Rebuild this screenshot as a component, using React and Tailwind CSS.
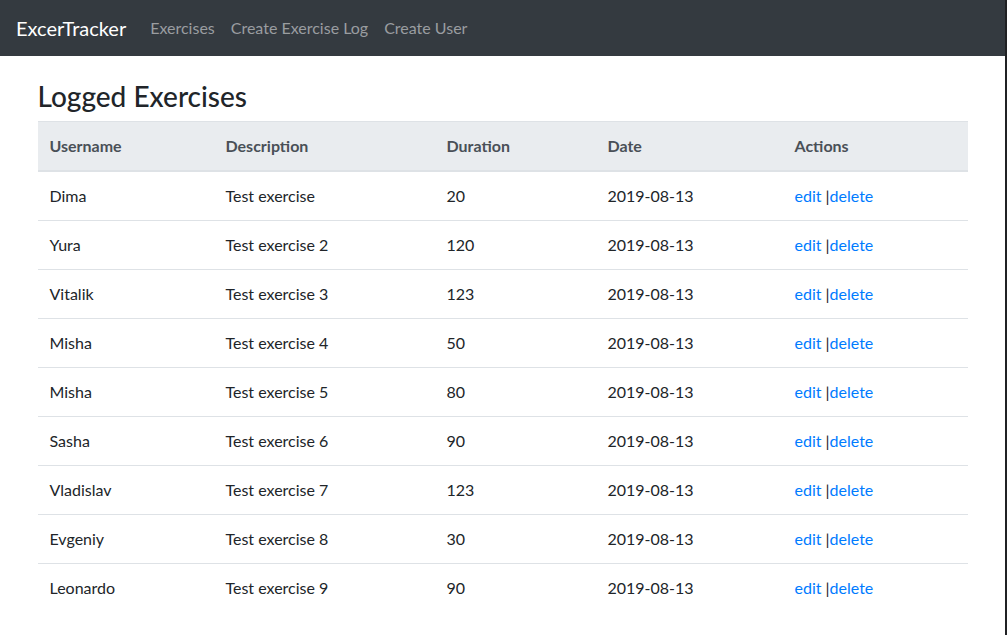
import React from 'react';

const exercises = [
  { username: 'Dima', description: 'Test exercise', duration: 20, date: '2019-08-13' },
  { username: 'Yura', description: 'Test exercise 2', duration: 120, date: '2019-08-13' },
  { username: 'Vitalik', description: 'Test exercise 3', duration: 123, date: '2019-08-13' },
  { username: 'Misha', description: 'Test exercise 4', duration: 50, date: '2019-08-13' },
  { username: 'Misha', description: 'Test exercise 5', duration: 80, date: '2019-08-13' },
  { username: 'Sasha', description: 'Test exercise 6', duration: 90, date: '2019-08-13' },
  { username: 'Vladislav', description: 'Test exercise 7', duration: 123, date: '2019-08-13' },
  { username: 'Evgeniy', description: 'Test exercise 8', duration: 30, date: '2019-08-13' },
  { username: 'Leonardo', description: 'Test exercise 9', duration: 90, date: '2019-08-13' },
];

function Navbar() {
  return (
    <nav className="h-14 bg-[#343a40] flex items-center px-4">
      <a href="#" className="text-white text-[20px] mr-4 leading-[30px]">ExcerTracker</a>
      <div className="flex">
        <a href="#" className="px-2 text-[#9a9da0] leading-6">Exercises</a>
        <a href="#" className="px-2 text-[#9a9da0] leading-6">Create Exercise Log</a>
        <a href="#" className="px-2 text-[#9a9da0] leading-6">Create User</a>
      </div>
    </nav>
  );
}

function ExercisesList() {
  return (
    <div className="w-[930px] mx-auto pt-6">
      <h3 className="text-[28px] font-medium leading-[1.2] text-[#212529] mb-[7px]">Logged Exercises</h3>
      <table className="w-full border-collapse text-[#212529]">
        <thead className="bg-[#e9ecef] text-[#495057]">
          <tr>
            <th className="w-[176px] text-left font-bold p-3 border-t border-b-2 border-[#dee2e6]">Username</th>
            <th className="w-[221px] text-left font-bold p-3 border-t border-b-2 border-[#dee2e6]">Description</th>
            <th className="w-[161px] text-left font-bold p-3 border-t border-b-2 border-[#dee2e6]">Duration</th>
            <th className="w-[187px] text-left font-bold p-3 border-t border-b-2 border-[#dee2e6]">Date</th>
            <th className="text-left font-bold p-3 border-t border-b-2 border-[#dee2e6]">Actions</th>
          </tr>
        </thead>
        <tbody>
          {exercises.map((ex, i) => (
            <tr key={i}>
              <td className={`p-3 ${i === 0 ? '' : 'border-t border-[#dee2e6]'}`}>{ex.username}</td>
              <td className={`p-3 ${i === 0 ? '' : 'border-t border-[#dee2e6]'}`}>{ex.description}</td>
              <td className={`p-3 ${i === 0 ? '' : 'border-t border-[#dee2e6]'}`}>{ex.duration}</td>
              <td className={`p-3 ${i === 0 ? '' : 'border-t border-[#dee2e6]'}`}>{ex.date}</td>
              <td className={`p-3 ${i === 0 ? '' : 'border-t border-[#dee2e6]'}`}>
                <a href="#" className="text-[#007bff]">edit</a> |<a href="#" className="text-[#007bff]">delete</a>
              </td>
            </tr>
          ))}
        </tbody>
      </table>
    </div>
  );
}

export default function App() {
  return (
    <div className="flex h-[635px] overflow-hidden font-['Segoe_UI','Lato',sans-serif] text-base leading-6">
      <div className="flex-1 bg-white">
        <Navbar />
        <ExercisesList />
      </div>
      <div className="w-[2px] bg-[#202124]" />
    </div>
  );
}
